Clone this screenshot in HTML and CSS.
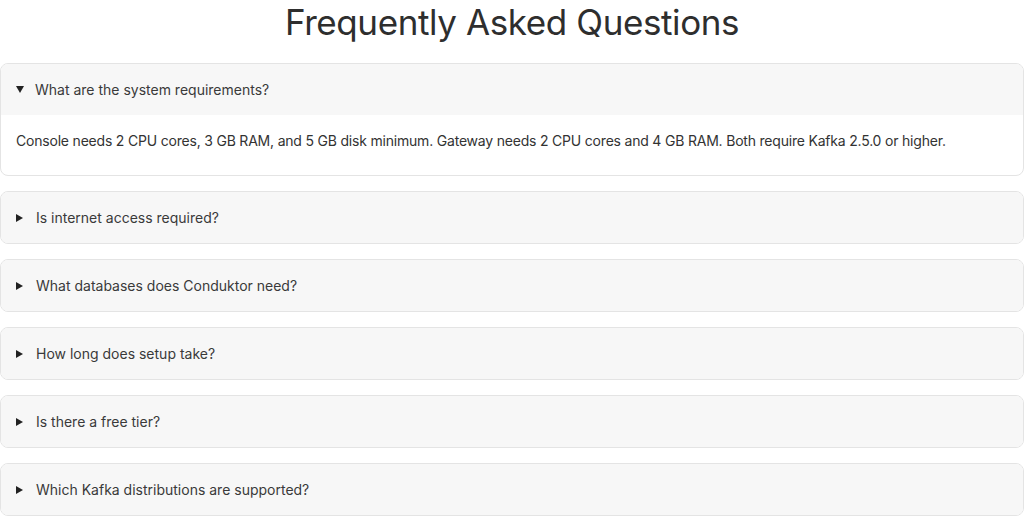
FILE: index.html
```html
<!DOCTYPE html>
<html lang="en">
<head>
<meta charset="utf-8">
<title>FAQ</title>
<link rel="stylesheet" href="styles.css">
</head>
<body>
<section class="faq">
  <h1 class="faq-title">Frequently Asked Questions</h1>
  <details class="faq-item" open>
    <summary class="faq-q">What are the system requirements?</summary>
    <div class="faq-a">Console needs 2 CPU cores, 3 GB RAM, and 5 GB disk minimum. Gateway needs 2 CPU cores and 4 GB RAM. Both require Kafka 2.5.0 or higher.</div>
  </details>
  <details class="faq-item">
    <summary class="faq-q">Is internet access required?</summary>
    <div class="faq-a">No.</div>
  </details>
  <details class="faq-item">
    <summary class="faq-q">What databases does Conduktor need?</summary>
    <div class="faq-a">PostgreSQL.</div>
  </details>
  <details class="faq-item">
    <summary class="faq-q">How long does setup take?</summary>
    <div class="faq-a">Minutes.</div>
  </details>
  <details class="faq-item">
    <summary class="faq-q">Is there a free tier?</summary>
    <div class="faq-a">Yes.</div>
  </details>
  <details class="faq-item">
    <summary class="faq-q">Which Kafka distributions are supported?</summary>
    <div class="faq-a">All major distributions.</div>
  </details>
</section>
</body>
</html>
```
FILE: styles.css
```css
html, body {
  margin: 0;
  padding: 0;
  background: #ffffff;
}
body {
  font-family: Inter, "Noto Sans", sans-serif;
  color: #333333;
}
.faq {
  display: flex;
  flex-direction: column;
  gap: 15px;
}
.faq-title {
  margin: 0 0 4px;
  font-size: 35px;
  line-height: 44px;
  font-weight: 400;
  letter-spacing: -0.4px;
  text-align: center;
  color: #2e2e2e;
}
.faq-item {
  border: 1px solid #e4e4e4;
  border-radius: 8px;
  overflow: hidden;
  background: #ffffff;
}
.faq-q {
  list-style: none;
  display: flex;
  align-items: center;
  gap: 13px;
  padding: 15.5px 15px;
  background: #f7f7f7;
  font-size: 14px;
  line-height: 20px;
  color: #3a3a3a;
  cursor: pointer;
}
.faq-q::-webkit-details-marker {
  display: none;
}
.faq-q::before {
  content: "";
  flex: none;
  width: 0;
  height: 0;
  border-left: 7px solid #222222;
  border-top: 4.5px solid transparent;
  border-bottom: 4.5px solid transparent;
}
.faq-item[open] > .faq-q::before {
  border-left: 4.5px solid transparent;
  border-right: 4.5px solid transparent;
  border-top: 7px solid #222222;
  border-bottom: 0;
  margin-right: -2px;
}
.faq-a {
  padding: 16px 15px 24px;
  font-size: 14px;
  line-height: 20px;
  letter-spacing: -0.2px;
  color: #333333;
}
```
